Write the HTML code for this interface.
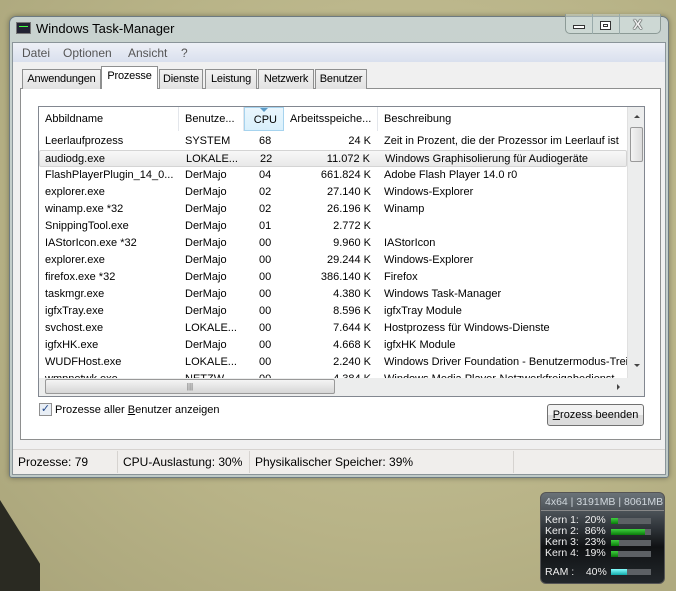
<!DOCTYPE html>
<html><head><meta charset="utf-8"><style>
*{margin:0;padding:0;box-sizing:border-box}
body{width:676px;height:591px;overflow:hidden;position:relative;font-family:"Liberation Sans",sans-serif;font-size:11px;color:#000;
background:radial-gradient(ellipse at 60% 40%,#c9c59c 0%,#b8b387 60%,#a9a47a 100%)}
.abs{position:absolute}
.win{left:9px;top:16px;width:660px;height:462px;border:1px solid #6d7a80;border-radius:7px 7px 3px 3px;background:linear-gradient(#c8d2cf,#bfcac7);box-shadow:0 0 6px rgba(0,0,0,.35)}
.client{left:12px;top:42px;width:654px;height:433px;background:#f0f0f0;border:1px solid #8a9499}
.menu{left:13px;top:43px;width:652px;height:19px;background:linear-gradient(#eef0f6,#d9e0ee);color:#555;font-size:12px}
.menu span{position:absolute;top:3px}
.tab{top:69px;height:20px;border:1px solid #8e8f8f;border-bottom:none;background:linear-gradient(#f2f2f2,#e2e2e2);font-size:11px;padding:3px 0 0;text-align:center;letter-spacing:-0.2px}
.panel{left:20px;top:88px;width:641px;height:352px;background:#fff;border:1px solid #8e8f8f}
.list{left:38px;top:106px;width:607px;height:291px;border:1px solid #828790;background:#fff;overflow:hidden}
.hdr{position:absolute;top:0;height:24px;border-right:1px solid #e3e6eb;font-size:11px;padding:6px 6px 0}
.row{position:absolute;left:0;width:588px;height:17px;font-size:11px}
.row span{position:absolute;top:2px;white-space:nowrap}
.status{left:13px;top:449px;width:652px;height:25px;background:#f0eeec;border-top:1px solid #d6d3d0;font-size:12px}
.status span{position:absolute;top:5px}
.gad{left:540px;top:492px;width:125px;height:92px;border-radius:6px;background:linear-gradient(#6a7278 0%,#2d3237 40%,#101214 60%,#22272b 100%);border:1px solid #555;color:#f0f0f0;font-size:10.5px}
.bar{position:absolute;left:70px;width:40px;height:6px;background:#5d6165}
.bar i{position:absolute;left:0;top:0;height:6px;background:linear-gradient(#3fcf3f,#0a7a0a)}
</style></head><body>
<div class="abs win"></div>
<div class="abs" style="left:16px;top:22px;width:15px;height:12px;background:#223;border:1px solid #777"><div style="margin:3px 2px;height:3px;border-top:1px solid #4f4"></div></div>
<div class="abs" style="left:36px;top:21px;font-size:13px">Windows Task-Manager</div>
<div class="abs" style="left:565px;top:14px;width:96px;height:20px;border:1px solid #8c9a96;border-top:none;border-radius:0 0 5px 5px;background:rgba(210,222,218,.5)"></div>
<div class="abs" style="left:592px;top:14px;width:1px;height:20px;background:#9aa"></div>
<div class="abs" style="left:619px;top:14px;width:1px;height:20px;background:#9aa"></div>
<div class="abs" style="left:573px;top:25px;width:12px;height:4px;border:1px solid #333;background:#fff"></div>
<div class="abs" style="left:600px;top:21px;width:11px;height:9px;border:1px solid #333;background:#fff"><div style="margin:2px;height:3px;border:1px solid #333"></div></div>
<div class="abs" style="left:633px;top:16px;font-size:14px;font-weight:bold;color:#eee;text-shadow:0 0 1px #222,0 0 1px #222,0 0 1px #222">X</div>
<div class="abs client"></div>
<div class="abs menu"><span style="left:9px">Datei</span><span style="left:50px">Optionen</span><span style="left:115px">Ansicht</span><span style="left:168px">?</span></div>
<div class="abs panel"></div>
<div class="abs tab" style="left:22px;width:79px">Anwendungen</div>
<div class="abs tab" style="left:101px;top:66px;height:23px;width:57px;background:#fff;z-index:2;border-color:#8e8f8f">Prozesse</div>
<div class="abs tab" style="left:159px;width:44px">Dienste</div>
<div class="abs tab" style="left:205px;width:52px">Leistung</div>
<div class="abs tab" style="left:258px;width:56px">Netzwerk</div>
<div class="abs tab" style="left:315px;width:52px">Benutzer</div>
<div class="abs list">
<div class="hdr" style="left:0;width:140px">Abbildname</div>
<div class="hdr" style="left:140px;width:65px">Benutze...</div>
<div class="hdr" style="left:205px;width:40px;text-align:right;background:linear-gradient(#eaf6fd,#d9f0fc);border:1px solid #a6d3ee">CPU</div>
<div class="abs" style="left:221px;top:1px;border:4px solid transparent;border-top:4px solid #5c9bc7;border-bottom:none"></div>
<div class="hdr" style="left:245px;width:94px">Arbeitsspeiche...</div>
<div class="hdr" style="left:339px;width:250px;border:none">Beschreibung</div>
<div id="rows"></div>
<div class="abs" style="left:588px;top:0;width:17px;height:272px;background:#eceded;border-left:1px solid #e0e0e0"><div style="position:absolute;left:6px;top:8px;border:3px solid transparent;border-bottom:3px solid #444;border-top:none"></div><div style="position:absolute;left:2px;top:20px;width:13px;height:35px;border:1px solid #999;border-radius:2px;background:linear-gradient(90deg,#f4f4f4,#dcdcdc)"></div><div style="position:absolute;left:6px;top:257px;border:3px solid transparent;border-top:3px solid #444;border-bottom:none"></div></div>
<div class="abs" style="left:0;top:271px;width:589px;height:18px;background:#eceded"><div style="position:absolute;left:6px;top:6px;border:3px solid transparent;border-right:3px solid #444;border-left:none"></div><div style="position:absolute;left:6px;top:1px;width:290px;height:15px;border:1px solid #999;border-radius:2px;background:linear-gradient(#f4f4f4,#d6d6d6);text-align:center;font-size:8px;line-height:13px;color:#555">|||</div><div style="position:absolute;left:578px;top:6px;border:3px solid transparent;border-left:3px solid #444;border-right:none"></div></div>
<div class="abs" style="left:588px;top:271px;width:17px;height:18px;background:#eceded"></div>
</div>
<div class="abs" style="left:39px;top:403px;width:13px;height:13px;border:1px solid #8f8f8f;background:#e8eef5;color:#22488a;font-size:11px;line-height:11px;text-align:center">✓</div>
<div class="abs" style="left:55px;top:404px;font-size:11px">Prozesse aller <u>B</u>enutzer anzeigen</div>
<div class="abs" style="left:547px;top:404px;width:97px;height:22px;border:1px solid #707070;border-radius:3px;background:linear-gradient(#f2f2f2 50%,#dcdcdc 50%);font-size:11px;text-align:center;line-height:20px"><u>P</u>rozess beenden</div>
<div class="abs status"><span style="left:5px">Prozesse: 79</span><span style="left:110px">CPU-Auslastung: 30%</span><span style="left:242px">Physikalischer Speicher: 39%</span>
<div class="abs" style="left:104px;top:1px;width:1px;height:22px;background:#d6d3d0"></div><div class="abs" style="left:236px;top:1px;width:1px;height:22px;background:#d6d3d0"></div><div class="abs" style="left:500px;top:1px;width:1px;height:22px;background:#d6d3d0"></div></div>
<div class="abs" style="left:0;top:500px;width:40px;height:91px;background:#2a2a22;clip-path:polygon(0 0,50% 35%,100% 70%,100% 100%,0 100%)"></div>
<div class="abs gad">
<div class="abs" style="left:4px;top:3px;color:#cfd6dc">4x64 | 3191MB | 8061MB</div>
<div class="abs" style="left:0;top:17px;width:123px;height:1px;background:#888"></div>
<div class="abs" style="left:4px;top:22px;line-height:11px">Kern 1:&nbsp; 20%<br>Kern 2:&nbsp; 86%<br>Kern 3:&nbsp; 23%<br>Kern 4:&nbsp; 19%</div>
<div class="bar" style="top:25px"><i style="width:7px"></i></div>
<div class="bar" style="top:36px"><i style="width:34px"></i></div>
<div class="bar" style="top:47px"><i style="width:8px"></i></div>
<div class="bar" style="top:58px"><i style="width:7px"></i></div>
<div class="abs" style="left:4px;top:73px">RAM :&nbsp;&nbsp;&nbsp; 40%</div>
<div class="bar" style="top:76px"><i style="width:16px;background:linear-gradient(#8ff,#1aa)"></i></div>
</div>
<script>
var d=[["Leerlaufprozess","SYSTEM","68","24 K","Zeit in Prozent, die der Prozessor im Leerlauf ist"],
["audiodg.exe","LOKALE...","22","11.072 K","Windows Graphisolierung für Audiogeräte"],
["FlashPlayerPlugin_14_0...","DerMajo","04","661.824 K","Adobe Flash Player 14.0 r0"],
["explorer.exe","DerMajo","02","27.140 K","Windows-Explorer"],
["winamp.exe *32","DerMajo","02","26.196 K","Winamp"],
["SnippingTool.exe","DerMajo","01","2.772 K",""],
["IAStorIcon.exe *32","DerMajo","00","9.960 K","IAStorIcon"],
["explorer.exe","DerMajo","00","29.244 K","Windows-Explorer"],
["firefox.exe *32","DerMajo","00","386.140 K","Firefox"],
["taskmgr.exe","DerMajo","00","4.380 K","Windows Task-Manager"],
["igfxTray.exe","DerMajo","00","8.596 K","igfxTray Module"],
["svchost.exe","LOKALE...","00","7.644 K","Hostprozess für Windows-Dienste"],
["igfxHK.exe","DerMajo","00","4.668 K","igfxHK Module"],
["WUDFHost.exe","LOKALE...","00","2.240 K","Windows Driver Foundation - Benutzermodus-Treib"],
["wmpnetwk.exe","NETZW...","00","4.384 K","Windows Media Player-Netzwerkfreigabedienst"]];
var h="";d.forEach(function(r,i){var t=26+i*17;
h+='<div class="row" style="top:'+t+'px;'+(i==1?'background:linear-gradient(#f8f8f8,#e9e9e9);border:1px solid #d4d4d4;border-radius:2px;':'')+'"><span style="left:'+(i==1?5:6)+'px">'+r[0]+'</span><span style="left:146px">'+r[1]+'</span><span style="left:220px">'+r[2]+'</span><span style="right:256px">'+r[3]+'</span><span style="left:345px">'+r[4]+'</span></div>';});
document.getElementById("rows").innerHTML=h;
</script>
</body></html>
